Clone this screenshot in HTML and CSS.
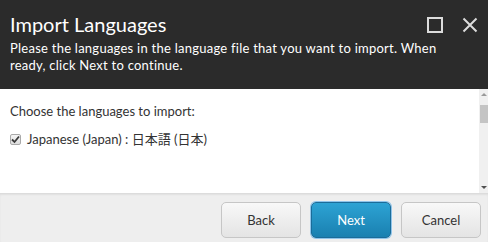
FILE: index.html
```html
<!DOCTYPE html>
<html lang="en">
<head>
  <meta charset="UTF-8" />
  <title>Import Languages</title>
  <link rel="stylesheet" href="styles.css">
</head>
<body>
  <div class="dialog">
    <div class="dialog-header">
      <div class="header-text">
        <h1>Import Languages</h1>
        <p>Please the languages in the language file that you want to import. When ready, click Next to continue.</p>
      </div>
      <div class="header-icons">
        <svg width="16" height="16" viewBox="0 0 16 16">
          <rect x="1" y="1" width="14" height="14" fill="none" stroke="#dcdcdc" stroke-width="2"/>
        </svg>
        <svg width="16" height="16" viewBox="0 0 16 16">
          <path d="M1.5 1.5 L14.5 14.5 M14.5 1.5 L1.5 14.5" stroke="#dcdcdc" stroke-width="2"/>
        </svg>
      </div>
    </div>

    <div class="dialog-body">
      <div class="body-content">
        <p class="hint">Choose the languages to import:</p>
        <label class="lang-item">
          <span class="check">
            <svg width="9" height="9" viewBox="0 0 9 9">
              <path d="M1 4.5 L3.5 7 L8 1.5" fill="none" stroke="#3a3a3a" stroke-width="1.8"/>
            </svg>
          </span>
          <span class="lang-name">Japanese (Japan) : 日本語 (日本)</span>
        </label>
      </div>
      <div class="scrollbar">
        <span class="arrow-up"></span>
        <span class="thumb"></span>
        <span class="track"></span>
        <span class="arrow-down"></span>
      </div>
    </div>

    <div class="dialog-footer">
      <button class="btn">Back</button>
      <button class="btn btn-primary">Next</button>
      <button class="btn">Cancel</button>
    </div>
  </div>
</body>
</html>
```

FILE: styles.css
```css
* {
  box-sizing: border-box;
}

body {
  margin: 0;
  font-family: 'Lato', 'Noto Sans CJK JP', sans-serif;
  background-color: #fff;
  color: #333;
}

.dialog {
  width: 488px;
  height: 242px;
  display: flex;
  flex-direction: column;
}

.dialog-header {
  background-color: #2b2b2b;
  color: #fff;
  height: 89px;
  padding: 11px 10px 0 10px;
  display: flex;
  justify-content: space-between;
}

.header-text {
  flex: 1;
  min-width: 0;
}

.dialog-header h1 {
  margin: 0;
  font-size: 20px;
  font-weight: normal;
  line-height: 26px;
}

.dialog-header p {
  margin: 3px 0 0 0;
  font-size: 13px;
  line-height: 17px;
  letter-spacing: 0.25px;
  width: 432px;
}

.header-icons {
  flex-shrink: 0;
  display: flex;
  gap: 19px;
  padding-top: 6px;
}

.dialog-body {
  flex: 1;
  display: flex;
  overflow: hidden;
}

.body-content {
  flex: 1;
  padding: 14px 10px 0 10px;
  font-size: 13px;
  line-height: 17px;
}

.hint {
  margin: 0 0 11px 0;
}

.lang-item {
  display: flex;
  align-items: center;
  gap: 6px;
}

.check {
  width: 11px;
  height: 11px;
  border: 1px solid #a9a9a9;
  border-radius: 2px;
  background: linear-gradient(#f4f4f4, #dedede);
  display: flex;
  align-items: center;
  justify-content: center;
}

.scrollbar {
  width: 9px;
  background-color: #f0f0f0;
  display: flex;
  flex-direction: column;
  align-items: center;
  padding: 4px 0 4px 1px;
}

.arrow-up {
  width: 0;
  height: 0;
  border-left: 3px solid transparent;
  border-right: 3px solid transparent;
  border-bottom: 3px solid #9a9a9a;
  margin-bottom: 9px;
}

.thumb {
  width: 8px;
  height: 18px;
  background-color: #c4c4c4;
}

.track {
  flex: 1;
}

.arrow-down {
  width: 0;
  height: 0;
  border-left: 3px solid transparent;
  border-right: 3px solid transparent;
  border-top: 3px solid #505050;
}

.dialog-footer {
  height: 49px;
  background-color: #eeeeee;
  border-top: 1px solid #dcdcdc;
  box-shadow: inset 0 1px 2px rgba(0, 0, 0, 0.06);
  display: flex;
  justify-content: flex-end;
  align-items: flex-start;
  gap: 10px;
  padding: 8px 7px 0 0;
}

.btn {
  width: 80px;
  height: 36px;
  font-family: inherit;
  font-size: 13px;
  color: #333;
  background: linear-gradient(#f8f8f8, #e4e4e4);
  border: 1px solid #c6c6c6;
  border-radius: 5px;
  cursor: pointer;
}

.btn-primary {
  color: #fff;
  background: linear-gradient(#2da3d4, #1a80b0);
  border: 1px solid #1b6c99;
  box-shadow: 0 0 0 1px #8fc4ea;
}
```
